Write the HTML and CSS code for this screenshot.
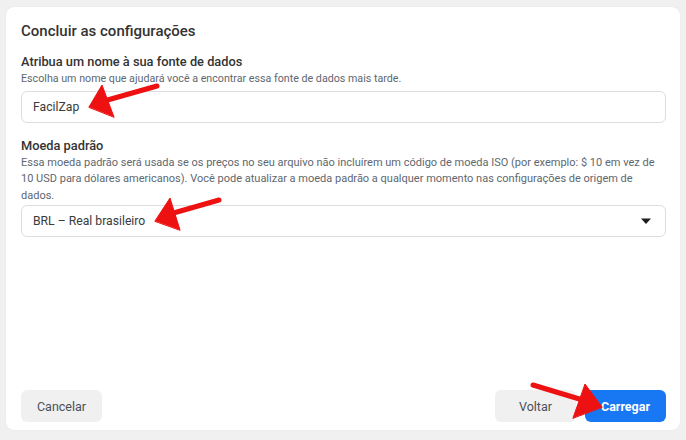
FILE: index.html
```html
<!DOCTYPE html>
<html lang="pt-BR">
<head>
    <meta charset="UTF-8">
    <meta name="viewport" content="width=device-width, initial-scale=1.0">
    <title>Concluir as configurações</title>
    <link rel="stylesheet" href="styles.css">
</head>
<body>
    <div class="card">
        <h2 class="card-title">Concluir as configurações</h2>

        <div class="field">
            <label class="field-label" for="nome">Atribua um nome à sua fonte de dados</label>
            <p class="field-help">Escolha um nome que ajudará você a encontrar essa fonte de dados mais tarde.</p>
            <div class="input-box" id="nome">FacilZap</div>
        </div>

        <div class="field">
            <label class="field-label" for="moeda">Moeda padrão</label>
            <p class="field-help long-help">Essa moeda padrão será usada se os preços no seu arquivo não incluírem um código de moeda ISO (por exemplo: $ 10 em vez de 10 USD para dólares americanos). Você pode atualizar a moeda padrão a qualquer momento nas configurações de origem de dados.</p>
            <div class="input-box select-box" id="moeda">
                <span>BRL – Real brasileiro</span>
                <svg class="caret" width="12" height="8" viewBox="0 0 12 8"><path d="M1 1.5h10L6 7z" fill="#1c1e21"/></svg>
            </div>
        </div>

        <div class="spacer"></div>

        <div class="footer">
            <button class="btn">Cancelar</button>
            <div class="footer-right">
                <button class="btn">Voltar</button>
                <button class="btn btn-primary">Carregar</button>
            </div>
        </div>
    </div>

    <!-- setas vermelhas de anotação por cima da captura -->
    <svg class="arrows" width="686" height="440" viewBox="0 0 686 440">
        <g stroke="#ee1111" stroke-linecap="round" fill="#ee1111">
            <line x1="157" y1="86" x2="104" y2="101" stroke-width="5"/>
            <polygon points="89,107 102,85 114,117" stroke-width="1"/>
            <line x1="219" y1="200" x2="170" y2="214" stroke-width="5"/>
            <polygon points="155,221 170,198 180,230" stroke-width="1"/>
            <line x1="533" y1="385" x2="586" y2="401" stroke-width="5"/>
            <polygon points="602,407 585,384 573,418" stroke-width="1"/>
        </g>
    </svg>
</body>
</html>
```

FILE: styles.css
```css
* {
    box-sizing: border-box;
}

body {
    margin: 0;
    padding: 7px 6px 10px 6px;
    background-color: #f0f0f0;
    font-family: Roboto, "Liberation Sans", Arial, sans-serif;
    color: #1c1e21;
    height: 440px;
}

.card {
    background-color: #fff;
    border-radius: 8px;
    height: 423px;
    padding: 14px 14px 8px 15px;
    display: flex;
    flex-direction: column;
    box-shadow: 0 0 1px rgba(0, 0, 0, 0.12);
}

.card-title {
    margin: 0 0 13px 0;
    font-size: 15px;
    font-weight: 500;
    line-height: 20px;
    color: #333;
}

.field {
    margin-bottom: 15px;
}

.field-label {
    display: block;
    font-size: 12.8px;
    font-weight: 500;
    line-height: 16px;
    color: #333;
}

.field-help {
    margin: 1px 0 3px 0;
    font-size: 10.7px;
    line-height: 16.5px;
    color: #606770;
}

.long-help {
    max-width: 638px;
    min-height: 49.5px;
    margin-bottom: 1px;
    font-size: 11px;
}

.input-box {
    height: 32px;
    border: 1px solid #dadde1;
    border-radius: 6px;
    padding: 0 11px;
    display: flex;
    align-items: center;
    font-size: 12.2px;
    color: #3a3b3c;
}

.select-box {
    justify-content: space-between;
}

.caret {
    margin-right: 2px;
}

.spacer {
    flex: 1;
}

.footer {
    display: flex;
    justify-content: space-between;
    align-items: center;
}

.footer-right {
    display: flex;
    gap: 9px;
}

.btn {
    width: 81px;
    height: 32px;
    border: none;
    border-radius: 6px;
    background-color: #f0f0f0;
    font-family: inherit;
    font-size: 12.5px;
    color: #4b4f56;
}

.btn-primary {
    background-color: #1877f2;
    color: #fff;
    font-weight: 700;
}

.arrows {
    position: absolute;
    left: 0;
    top: 0;
    pointer-events: none;
}
```
